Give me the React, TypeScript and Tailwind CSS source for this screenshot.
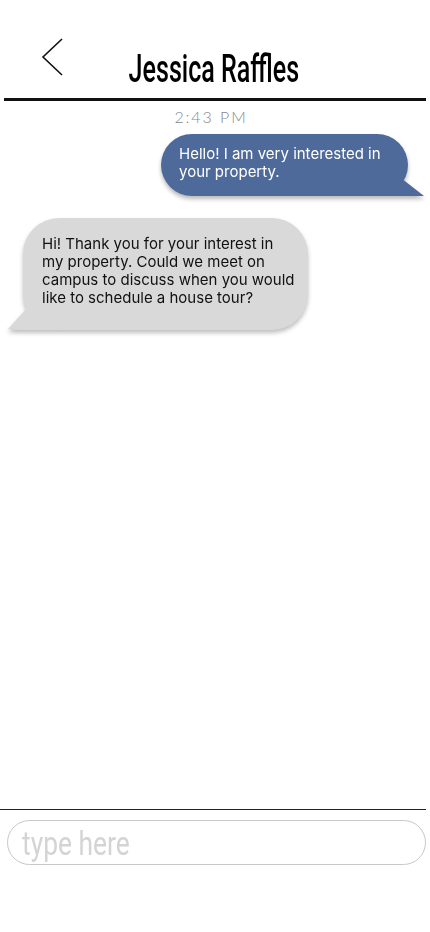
import React from "react";

export default function App() {
  return (
    <div className="w-[430px] h-[932px] bg-white flex flex-col overflow-hidden">
      {/* header */}
      <div className="relative h-[98px] flex items-end justify-center">
        <svg className="absolute left-[40px] top-[37px]" width="26" height="40" viewBox="0 0 26 40">
          <polyline points="22,2 3,20 22,38" fill="none" stroke="#111" strokeWidth="1.6" />
        </svg>
        <div className="inline-block origin-center scale-x-[0.66] text-[38px] leading-none font-medium text-black pb-[10px] pr-[4px] font-['Roboto',sans-serif] whitespace-nowrap">
          Jessica Raffles
        </div>
      </div>
      <div className="mx-[4px] h-[3px] bg-[#111]" />
      <div className="flex justify-center pt-[7px] pr-[8px] text-[16px] leading-[18px] tracking-[0.12em] text-[#888888] font-light font-['Lato',sans-serif]">
        2:43 PM
      </div>

      {/* outgoing */}
      <div className="flex justify-end pr-[22px] pt-[8px]">
        <div className="relative drop-shadow-[0_3px_2px_rgba(0,0,0,0.28)]">
          <div className="w-[247px] h-[62px] rounded-[31px] bg-[#4e6a9b] pl-[18px] pt-[11px] text-[15px] leading-[18px] text-white font-['Inter',sans-serif]">
            Hello! I am very interested in
            <br />
            your property.
          </div>
          <svg className="absolute left-[210px] top-[40px]" width="55" height="22" viewBox="0 0 55 22">
            <polygon points="0,22 30,4 53,22" fill="#4e6a9b" />
          </svg>
        </div>
      </div>

      {/* incoming */}
      <div className="flex justify-start pl-[23px] pt-[22px]">
        <div className="relative drop-shadow-[0_3px_2px_rgba(0,0,0,0.25)]">
          <div className="w-[285px] h-[112px] rounded-[36px] bg-[#d9d9d9] pl-[19px] pt-[17px] text-[15px] leading-[18px] text-[#111] font-['Inter',sans-serif]">
            Hi! Thank you for your interest in
            <br />
            my property. Could we meet on
            <br />
            campus to discuss when you would
            <br />
            like to schedule a house tour?
          </div>
          <svg className="absolute left-[-16px] top-[82px]" width="60" height="30" viewBox="0 0 60 30">
            <polygon points="1,29 20,8 52,30 10,30" fill="#d9d9d9" />
          </svg>
        </div>
      </div>

      <div className="flex-1" />

      {/* bottom */}
      <div className="mr-[4px] h-px bg-[#222]" />
      <div className="pt-[10px] pl-[7px] pr-[4px] pb-[67px]">
        <div className="h-[45px] rounded-full border border-[#c8c8c8] flex items-center pl-[14px]">
          <span className="inline-block origin-left scale-x-[0.8] text-[33px] leading-none text-[#d4d4d4] pt-[2px] font-['Roboto',sans-serif] whitespace-nowrap">
            type here
          </span>
        </div>
      </div>
    </div>
  );
}
